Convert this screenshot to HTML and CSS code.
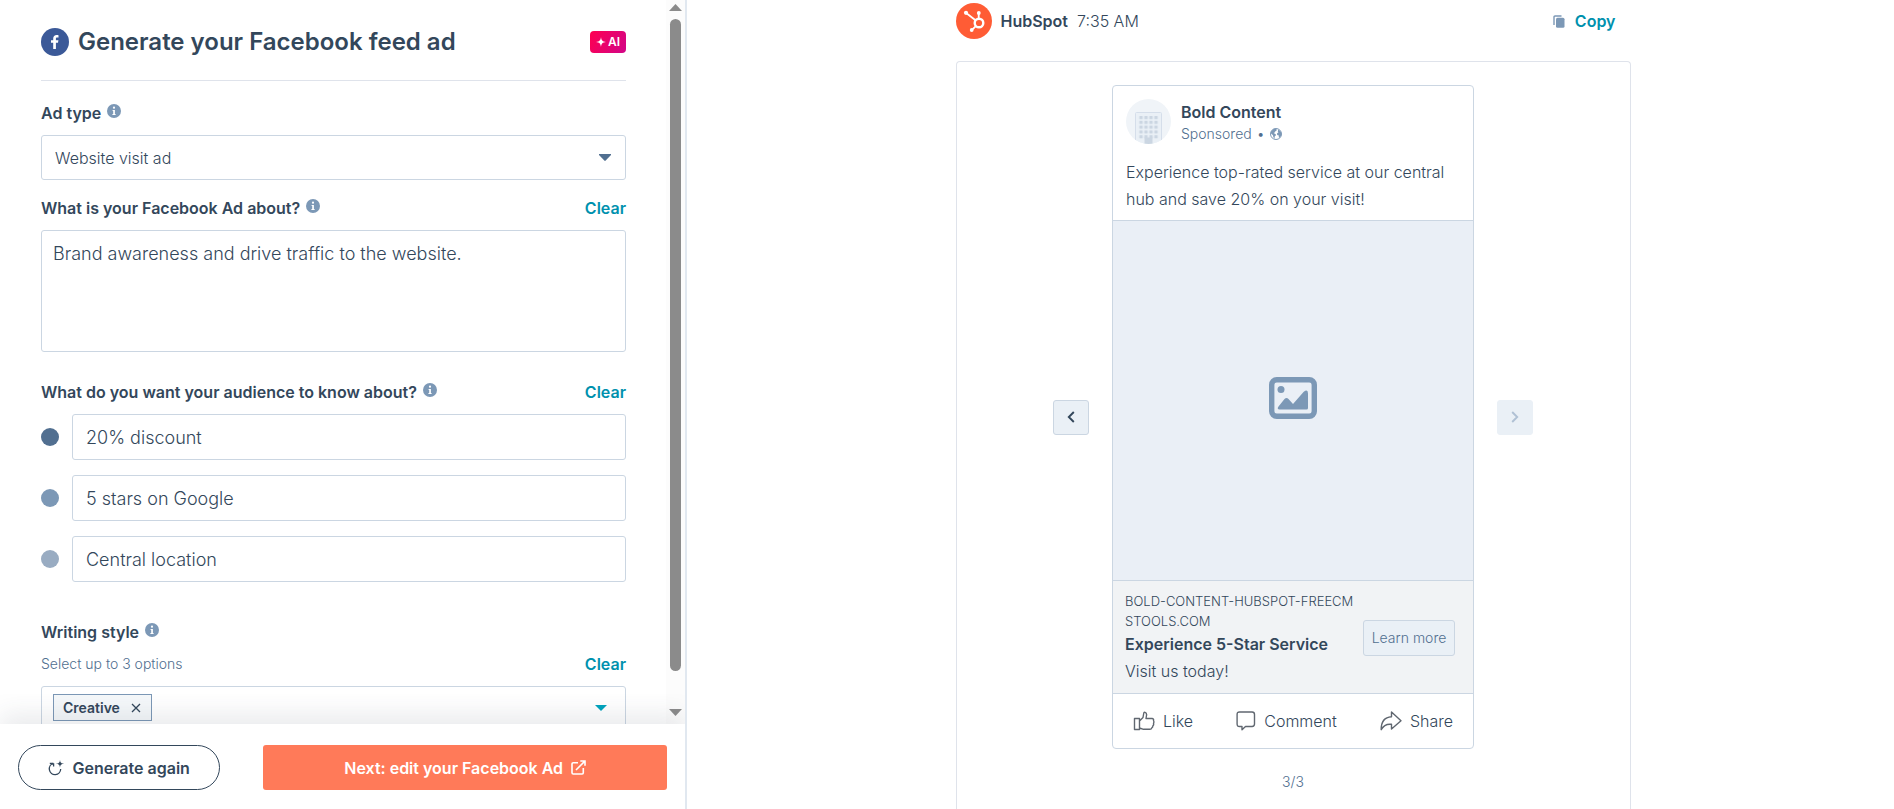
FILE: index.html
```html
<!DOCTYPE html>
<html lang="en">
<head>
<meta charset="utf-8">
<title>Generate your Facebook feed ad</title>
<link rel="stylesheet" href="styles.css">
</head>
<body>
<svg class="sprite" aria-hidden="true">
  <symbol id="info" viewBox="0 0 14 14"><circle cx="7" cy="7" r="7" fill="#7c98b6"/><path d="M5.6 5.9h2.3v4h.7v1.2H5.4V9.9h.8V7h-.6z" fill="#fff"/><circle cx="7" cy="3.7" r="1.1" fill="#fff"/></symbol>
</svg>
<div class="app">
  <section class="panel">
    <div class="panel-body">
      <form class="form" id="ad-form">
        <header class="form-head">
          <svg class="fb" viewBox="0 0 28 28" aria-hidden="true"><circle cx="14" cy="14" r="14" fill="#3b5998"/><path d="M12.2 21v-6.2H10v-2.5h2.2v-1.7c0-2.3 1.4-3.5 3.4-3.5.9 0 1.5.1 1.9.2v2.2h-1.2c-1.1 0-1.4.5-1.4 1.3v1.5h2.5l-.4 2.5h-2.1V21z" fill="#fff"/></svg>
          <h1 class="title">Generate your Facebook feed ad</h1>
          <span class="ai"><svg viewBox="0 0 10 10" width="10" height="10" aria-hidden="true"><path d="M5 0C5.4 3.4 6.6 4.6 10 5 6.600 5.400 5.400 6.600 5 10 4.600 6.600 3.400 5.400 0 5 3.400 4.600 4.600 3.400 5 0z" fill="#fff"/></svg>AI</span>
        </header>

        <div class="field">
          <div class="row"><label class="label" for="ad-type">Ad type</label><svg class="info"><use href="#info"/></svg></div>
          <div class="select-wrap">
            <select class="control select" id="ad-type"><option>Website visit ad</option></select>
            <svg class="caret" viewBox="0 0 12 7" aria-hidden="true"><path d="M0 0h12v1L6.700 6.600Q6 7.200 5.300 6.600L0 1z" fill="#516f90"/></svg>
          </div>
        </div>

        <div class="field field-tight">
          <div class="row"><label class="label" for="about">What is your Facebook Ad about?</label><svg class="info"><use href="#info"/></svg><button type="button" class="link">Clear</button></div>
          <textarea class="control area" id="about">Brand awareness and drive traffic to the website.</textarea>
        </div>

        <div class="field field-wide">
          <div class="row"><label class="label" for="point-1">What do you want your audience to know about?</label><svg class="info"><use href="#info"/></svg><button type="button" class="link">Clear</button></div>
          <div class="points">
            <div class="point"><span class="dot dot-1"></span><input class="control text" id="point-1" type="text" value="20% discount"></div>
            <div class="point"><span class="dot dot-2"></span><input class="control text" aria-label="Second point" type="text" value="5 stars on Google"></div>
            <div class="point"><span class="dot dot-3"></span><input class="control text" aria-label="Third point" type="text" value="Central location"></div>
          </div>
        </div>

        <div class="field field-last">
          <div class="row"><span class="label">Writing style</span><svg class="info"><use href="#info"/></svg></div>
          <div class="row row-sub"><span class="hint">Select up to 3 options</span><button type="button" class="link">Clear</button></div>
          <div class="control tags">
            <button type="button" class="tag">Creative <svg viewBox="0 0 10 10" width="10" height="10" aria-hidden="true"><path d="M1 1l8 8M9 1L1 9" stroke="#33475b" stroke-width="1.300" fill="none"/></svg></button>
            <button type="button" class="open" aria-label="Open options"><svg viewBox="0 0 12 6" width="12" height="6" aria-hidden="true"><path d="M0 0h12L6 6z" fill="#00a4bd"/></svg></button>
          </div>
        </div>
      </form>
      <div class="rail" aria-hidden="true">
        <svg viewBox="0 0 13 7" width="13" height="7"><path d="M6.500 0L13 7H0z" fill="#8b8b8b"/></svg>
        <span class="thumb"></span>
        <svg viewBox="0 0 13 7" width="13" height="7"><path d="M0 0h13L6.500 7z" fill="#8b8b8b"/></svg>
      </div>
    </div>
    <footer class="panel-foot">
      <button type="button" class="again"><svg viewBox="0 0 16 16" width="16" height="16" aria-hidden="true"><path d="M5.200 3.300H1.800M5.600 3.200v3.400M5.400 3.400A5.700 5.700 0 1 0 12.700 9" fill="none" stroke="#33475b" stroke-width="1.300"/><path d="M12 0c.3 2.600 1.100 3.400 4 3.700-2.900.3-3.700 1.100-4 4-.3-2.900-1.100-3.700-4-4 2.900-.3 3.700-1.100 4-3.700z" fill="#33475b"/></svg>Generate again</button>
      <button type="submit" form="ad-form" class="next">Next: edit your Facebook Ad<svg viewBox="0 0 15 15" width="15" height="15" aria-hidden="true"><path d="M7 2.700H2.200Q1 2.700 1 3.900v8.900Q1 14 2.200 14h8.900q1.200 0 1.200-1.200V8M5 10l8.600-8.600M9.300 1H14v4.700" fill="none" stroke="#fff" stroke-width="1.600"/></svg></button>
    </footer>
  </section>

  <main class="preview">
    <div class="message">
      <header class="msg-head">
        <svg viewBox="0 0 36 36" width="36" height="36" aria-hidden="true"><circle cx="18" cy="18" r="18" fill="#ff5c35"/><g stroke="#fff" fill="none"><circle cx="23" cy="20" r="4.300" stroke-width="2.400"/><path d="M22.700 15.500V11M19.500 17.300L10.500 10.200M19.800 23.200L16 26.800" stroke-width="1.800"/></g><g fill="#fff"><circle cx="22.800" cy="10" r="1.900"/><circle cx="10" cy="9.800" r="2.100"/><circle cx="15.700" cy="27" r="1.900"/></g></svg>
        <strong class="sender">HubSpot</strong><span class="time">7:35 AM</span>
        <button type="button" class="copy"><svg viewBox="0 0 12 13" width="12" height="13" aria-hidden="true"><path d="M8.500 1H2Q1 1 1 2v8" fill="none" stroke="#7c98b6" stroke-width="1.400"/><rect x="3" y="2.700" width="8.500" height="10" rx="1.500" fill="#7c98b6"/></svg>Copy</button>
      </header>
      <div class="frame">
        <div class="carousel">
          <button type="button" class="nav" aria-label="Previous"><svg viewBox="0 0 8 12" width="8" height="12"><path d="M6.800 1L1.800 6l5 5" fill="none" stroke="#33475b" stroke-width="1.900"/></svg></button>
          <article class="card">
            <div class="card-head">
              <svg viewBox="0 0 45 45" width="45" height="45" aria-hidden="true">
                <defs><clipPath id="round"><circle cx="22.500" cy="22.500" r="22.500"/></clipPath>
                <pattern id="windows" width="5" height="4.800" patternUnits="userSpaceOnUse" x="12.500" y="17"><rect x=".8" width="3.400" height="3.200" rx=".6" fill="#cbd6e2"/></pattern></defs>
                <g clip-path="url(#round)"><path d="M0 0h45v45H0z" fill="#f0f4f8"/><rect x="9.500" y="13.500" width="26" height="32" rx="1" fill="#eaf0f6" stroke="#d5deea"/><rect x="12.500" y="17" width="20" height="23" fill="url(#windows)"/><path d="M18.500 38.500h8v7h-8z" fill="#cbd6e2"/></g>
              </svg>
              <div class="who"><strong class="name">Bold Content</strong>
                <div class="sponsor"><span>Sponsored</span><span>•</span><svg viewBox="0 0 12 12" width="12" height="12" aria-hidden="true"><circle cx="6" cy="6" r="5.500" fill="#fff" stroke="#7c98b6"/><path d="M1 3.500L3.800.8 6.400 1 6.800 2.200 5.200 3.400 4.700 4.600 3.600 5 5.800 6.300 5.800 7.400 4.700 8.600 4.500 11 3.300 9 3 7.200 1 5.500zM8.300 1.200L11 4 11.400 7 9.800 9.800 8.800 9.200 8.800 7.400 7.200 7 7 5.400 8.400 4.300 7.800 3.400z" fill="#7c98b6"/></svg></div>
              </div>
            </div>
            <p class="copy-text">Experience top-rated service at our central hub and save 20% on your visit!</p>
            <div class="media"><svg viewBox="0 0 48 42" width="48" height="42" aria-hidden="true"><rect x="2.700" y="2.700" width="42.600" height="36.600" rx="5" fill="none" stroke="#7c98b6" stroke-width="5.400"/><circle cx="12" cy="12.500" r="3.500" fill="#7c98b6"/><path d="M9.500 29.500L15.500 22Q17.500 20 19.500 22L24 27 34.500 15Q39 11.500 39 16.500V31Q39 32.500 37.500 32.500H10.500Q7.500 32.200 9.500 29.500z" fill="#7c98b6"/></svg></div>
            <div class="offer">
              <div class="offer-text">
                <div class="domain">BOLD-CONTENT-HUBSPOT-FREECM<br>STOOLS.COM</div>
                <strong class="headline">Experience 5-Star Service</strong>
                <div class="desc">Visit us today!</div>
              </div>
              <button type="button" class="learn">Learn more</button>
            </div>
            <div class="actions">
              <button type="button" class="act"><svg viewBox="0 0 22 20" width="22" height="20" aria-hidden="true"><path d="M1.500 7.500h5v11h-5zM6.500 10L10 6.500 10.800 2Q11 1 12 1.300 14 2 13.500 4.500L13 7.500h6q2 .3 1.500 2 .8 1.500 0 2.800.5 1.500-.6 2.500 0 1.500-1.100 2-.3 1.500-2 1.500H10.500L6.500 17" fill="none" stroke="#606770" stroke-width="1.400" stroke-linejoin="round"/></svg>Like</button>
              <button type="button" class="act"><svg viewBox="0 0 20 20" width="20" height="20" aria-hidden="true"><path d="M3.500 1h12.600q2.400 0 2.400 2.400v9.700q0 2.400-2.400 2.400h-6.600L6 18.800v-3.300H3.500Q1.100 15.500 1.100 13.100V3.400Q1.100 1 3.500 1z" fill="none" stroke="#606770" stroke-width="1.400" stroke-linejoin="round"/></svg>Comment</button>
              <button type="button" class="act"><svg viewBox="0 0 22 20" width="22" height="20" aria-hidden="true"><path d="M11.500 1L21 9.800 11.500 18v-4.700Q4.500 12.500 1.200 18.700 1 6.500 11.500 5.700z" fill="none" stroke="#606770" stroke-width="1.400" stroke-linejoin="round"/></svg>Share</button>
            </div>
          </article>
          <button type="button" class="nav nav-off" aria-label="Next" disabled><svg viewBox="0 0 8 12" width="8" height="12"><path d="M1.200 1l5 5-5 5" fill="none" stroke="#b0c1d4" stroke-width="1.900"/></svg></button>
        </div>
        <div class="count">3/3</div>
      </div>
    </div>
  </main>
</div>
</body>
</html>
```
FILE: styles.css
```css
* { box-sizing: border-box; }
body {
  margin: 0;
  color: #33475b;
  background: #fff;
  font: 300 16px/24px Inter, "Open Sans", sans-serif;
}
button, input, select, textarea { font: inherit; color: inherit; }
button { margin: 0; padding: 0; border: 0; background: none; cursor: pointer; }
svg { display: block; flex: none; }
strong { font-weight: 600; }
.sprite { position: absolute; width: 0; height: 0; }

.app { display: grid; grid-template-columns: 687fr 1207fr; height: 100vh; overflow: hidden; }

/* Form panel */
.panel { display: flex; flex-direction: column; min-width: 0; min-height: 0; border-right: 2px solid #e1e8f0; }
.panel-body { display: flex; flex: 1; min-height: 0; }
.form { flex: 1; min-width: 0; overflow: hidden; padding: 25px 40px 0 41px; }
.form-head { display: flex; align-items: center; gap: 9px; padding-bottom: 21px; border-bottom: 1px solid #dfe3eb; }
.fb { width: 28px; height: 28px; }
.title { margin: 0; font-size: 24px; line-height: 34px; font-weight: 600; white-space: nowrap; }
.ai {
  display: flex; align-items: center; justify-content: center; gap: 2px;
  width: 36px; height: 22px; margin-left: auto; border-radius: 4px;
  background: linear-gradient(120deg, #ff0050, #d20688);
  color: #fff; font-size: 12px; font-weight: 600;
}
.field { display: flex; flex-direction: column; gap: 10px; padding-top: 20px; }
.field-tight { padding-top: 16px; }
.field-wide { padding-top: 28px; }
.field-last { padding-top: 38px; }
.row { display: flex; align-items: center; gap: 6px; white-space: nowrap; }
.label { font-weight: 600; }
.info { width: 14px; height: 14px; margin-bottom: 4px; }
.link { margin-left: auto; color: #0091ae; font-weight: 600; }
.control { width: 100%; border: 1px solid #cbd6e2; border-radius: 3px; background: #fff; outline: 0; }
.select-wrap { display: grid; align-items: center; }
.select-wrap > * { grid-area: 1 / 1; }
.select { height: 45px; padding: 0 13px; appearance: none; }
.caret { width: 12px; height: 7px; justify-self: end; margin-right: 15px; pointer-events: none; }
.area { display: block; height: 122px; padding: 9px 11px; font-size: 18px; line-height: 27px; resize: none; }
.points { display: flex; flex-direction: column; gap: 15px; }
.point { display: flex; align-items: center; gap: 13px; }
.text { flex: 1; min-width: 0; height: 46px; padding: 0 13px; font-size: 18px; }
.dot { flex: none; width: 18px; height: 18px; border-radius: 50%; }
.dot-1 { background: #516f90; }
.dot-2 { background: #7c98b6; }
.dot-3 { background: #99acc2; }
.row-sub { margin-top: -2px; }
.hint { color: #516f90; font-size: 14px; }
.tags { display: flex; align-items: flex-start; justify-content: space-between; height: 90px; padding: 7px 18px 0 11px; }
.tag {
  display: flex; align-items: center; gap: 11px; height: 27px; padding: 0 10px 0 9px;
  border: 1px solid #7c98b6; background: #f5f8fa; font-size: 14px; font-weight: 600;
}
.open { height: 27px; }
.rail { display: flex; flex-direction: column; align-items: center; gap: 8px; width: 19px; padding: 4px 0 8px; background: #fcfcfc; }
.thumb { flex: 1; width: 11px; margin-bottom: 30px; border-radius: 6px; background: #8b8b8b; }
.panel-foot {
  position: relative; display: flex; gap: 43px; padding: 21px 18px 19px 18px;
  background: #fff; box-shadow: 0 -10px 24px rgba(45, 62, 80, .1);
  clip-path: inset(-30px 0 0 0);
}
.again, .next { display: flex; align-items: center; justify-content: center; height: 45px; font-weight: 600; white-space: nowrap; }
.again { gap: 8px; flex: 201 1 0; border: 1px solid #33475b; border-radius: 23px; }
.next { gap: 8px; flex: 405 1 0; border-radius: 3px; background: #ff7a59; color: #fff; }

/* Ad preview */
.preview { display: flex; justify-content: center; min-width: 0; overflow: hidden; padding-left: 5px; }
.message { display: flex; flex-direction: column; width: 100%; max-width: 675px; padding-top: 3px; }
.msg-head { display: flex; align-items: center; gap: 9px; padding-right: 15px; }
.copy { display: flex; align-items: center; gap: 10px; margin-left: auto; color: #0091ae; font-weight: 600; }
.frame { flex: 1; margin-top: 22px; padding-top: 23px; border: 1px solid #dfe3eb; border-bottom: 0; border-radius: 4px 4px 0 0; }
.carousel { display: flex; align-items: center; justify-content: center; gap: 23px; }
.nav { display: grid; place-items: center; width: 36px; height: 35px; border: 1px solid #cbd6e2; border-radius: 3px; background: #eaf0f6; }
.nav-off { border-color: #eaf0f6; }
.card { width: 362px; border: 1px solid #cbd6e2; border-radius: 4px; overflow: hidden; }
.card-head { display: flex; gap: 10px; padding: 13px 13px 0; }
.who { padding-top: 1px; }
.name { display: block; }
.sponsor { display: flex; align-items: center; gap: 5px; color: #516f90; font-size: 14px; line-height: 20px; }
.copy-text { margin: 0; padding: 15px 13px 7px; line-height: 27px; }
.media { display: grid; place-items: center; height: 361px; padding-bottom: 6px; border: solid #cbd6e2; border-width: 1px 0; background: #eaeff6; }
.offer { display: flex; align-items: center; justify-content: space-between; padding: 10px 18px 8px 12px; border-bottom: 1px solid #cbd6e2; background: #f1f3f5; }
.offer-text { line-height: 27px; white-space: nowrap; }
.domain { font-size: 13px; line-height: 20px; }
.headline { display: block; }
.learn { flex: none; width: 92px; height: 36px; border: 1px solid #cbd6e2; border-radius: 3px; background: #eaf0f6; color: #516f90; font-size: 14px; }
.actions { display: flex; justify-content: space-between; padding: 15px 20px; }
.act { display: flex; align-items: center; gap: 8px; }
.count { padding-top: 21px; text-align: center; color: #516f90; font-size: 14px; }
```
